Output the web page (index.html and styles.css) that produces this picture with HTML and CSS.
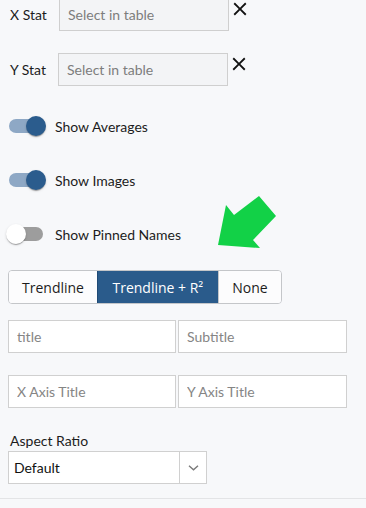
FILE: index.html
```html
<!DOCTYPE html>
<html lang="en">
<head>
  <meta charset="UTF-8" />
  <title>Chart Options</title>
  <link rel="stylesheet" href="styles.css">
</head>
<body>
  <div class="panel">
    <div class="stat-row">
      <label class="stat-label">X Stat</label>
      <input class="stat-input" type="text" placeholder="Select in table" readonly />
      <svg class="clear" viewBox="0 0 24 24"><path d="M19 6.41L17.59 5 12 10.59 6.41 5 5 6.41 10.59 12 5 17.59 6.41 19 12 13.41 17.59 19 19 17.59 13.41 12z"/></svg>
    </div>
    <div class="stat-row stat-row-y">
      <label class="stat-label">Y Stat</label>
      <input class="stat-input" type="text" placeholder="Select in table" readonly />
      <svg class="clear" viewBox="0 0 24 24"><path d="M19 6.41L17.59 5 12 10.59 6.41 5 5 6.41 10.59 12 5 17.59 6.41 19 12 13.41 17.59 19 19 17.59 13.41 12z"/></svg>
    </div>

    <div class="toggles">
      <label class="toggle">
        <span class="switch on"><span class="track"></span><span class="thumb"></span></span>
        Show Averages
      </label>
      <label class="toggle">
        <span class="switch on"><span class="track"></span><span class="thumb"></span></span>
        Show Images
      </label>
      <label class="toggle">
        <span class="switch"><span class="track"></span><span class="thumb"></span></span>
        Show Pinned Names
      </label>
      <!-- pointer arrow drawn over the screenshot -->
      <svg class="arrow" viewBox="0 0 60 56" width="60" height="56">
        <polygon points="1,50 43,53 36,45 59,21 42,1 17,20 9,10" fill="#12d147"/>
      </svg>
    </div>

    <div class="btn-group">
      <button class="seg">Trendline</button>
      <button class="seg active">Trendline + R²</button>
      <button class="seg last">None</button>
    </div>

    <div class="field-grid">
      <input class="text-input" type="text" placeholder="title" />
      <input class="text-input" type="text" placeholder="Subtitle" />
    </div>
    <div class="field-grid field-grid-axis">
      <input class="text-input" type="text" placeholder="X Axis Title" />
      <input class="text-input" type="text" placeholder="Y Axis Title" />
    </div>

    <div class="select-group">
      <label class="select-label">Aspect Ratio</label>
      <div class="select">
        <span class="select-value">Default</span>
        <span class="select-arrow">
          <svg viewBox="0 0 11 6" width="11" height="6"><path d="M1 0.8l4.5 4L10 0.8" fill="none" stroke="#7a7a7a" stroke-width="1.4"/></svg>
        </span>
      </div>
    </div>
  </div>
</body>
</html>
```

FILE: styles.css
```css
* {
  margin: 0;
  padding: 0;
  box-sizing: border-box;
}

body {
  font-family: 'Lato', 'Liberation Sans', Arial, sans-serif;
  background: #f7f8fa;
  color: #1c1c1c;
  font-size: 14px;
  overflow: hidden;
}

.panel {
  margin-top: -2px;
  padding: 0 0 14px 8px;
  border-bottom: 1px solid #e3e4e6;
}

/* stat pickers */
.stat-row {
  display: flex;
  align-items: center;
  height: 33px;
}
.stat-row-y {
  margin-top: 22px;
}
.stat-label {
  width: 50px;
  padding-left: 2px;
  font-size: 14px;
}
.stat-input {
  width: 170px;
  height: 33px;
  padding: 0 8px;
  border: 1px solid #cfcfcf;
  background: #f3f4f6;
  font-family: inherit;
  font-size: 14px;
  color: #333;
  outline: none;
}
.stat-row:first-child .stat-input {
  margin-left: 1px;
}
.stat-input::placeholder {
  color: #7d7d7d;
}
.clear {
  align-self: flex-start;
  width: 22px;
  height: 22px;
  fill: #111;
}

/* switches */
.toggles {
  position: relative;
  margin-top: 21px;
  display: flex;
  flex-direction: column;
  gap: 16px;
}
.toggle {
  display: flex;
  align-items: center;
  height: 38px;
  margin-left: -11px;
  font-size: 14px;
}
.switch {
  position: relative;
  width: 58px;
  height: 38px;
  flex-shrink: 0;
}
.track {
  position: absolute;
  left: 12px;
  top: 12px;
  width: 34px;
  height: 14px;
  border-radius: 7px;
  background: #9d9d9d;
}
.thumb {
  position: absolute;
  left: 9px;
  top: 9px;
  width: 20px;
  height: 20px;
  border-radius: 50%;
  background: #fff;
  box-shadow: 0 2px 1px -1px rgba(0, 0, 0, 0.2), 0 1px 1px 0 rgba(0, 0, 0, 0.14), 0 1px 3px 0 rgba(0, 0, 0, 0.12);
}
.switch.on .track {
  background: #8ea8c5;
}
.switch.on .thumb {
  left: 29px;
  background: #2b5c8d;
}
.arrow {
  position: absolute;
  left: 209px;
  top: 88px;
}

/* trendline buttons */
.btn-group {
  display: inline-flex;
  margin-top: 17px;
  height: 34px;
  border: 1px solid #c4c6c9;
  border-radius: 4px;
  overflow: hidden;
}
.seg {
  border: none;
  background: #fcfcfd;
  font-family: 'Open Sans', 'Liberation Sans', Arial, sans-serif;
  font-size: 14px;
  color: #1c1c1c;
  padding: 0 13px;
  cursor: pointer;
}
.seg + .seg {
  border-left: 1px solid #c4c6c9;
}
.seg.active {
  background: #2a5b8b;
  color: #fff;
  border-color: #1f4a75;
  padding: 0 14.5px;
}
.seg.last {
  padding: 0 13.5px;
}

/* title inputs */
.field-grid {
  display: grid;
  grid-template-columns: 168px 169px;
  gap: 2px;
  margin-top: 16px;
}
.field-grid-axis {
  margin-top: 22px;
}
.text-input {
  height: 33px;
  padding: 0 8px;
  border: 1px solid #d0d0d0;
  background: #fff;
  font-family: inherit;
  font-size: 14px;
  outline: none;
}
.text-input::placeholder {
  color: #858585;
}

/* aspect ratio */
.select-group {
  margin-top: 24px;
}
.select-label {
  display: block;
  padding-left: 2px;
  font-size: 14px;
  line-height: 18px;
  margin-bottom: 1px;
}
.select {
  display: flex;
  width: 199px;
  height: 33px;
  border: 1px solid #d0d0d0;
  background: #fff;
}
.select-value {
  flex: 1;
  display: flex;
  align-items: center;
  padding-left: 5px;
  color: #111;
}
.select-arrow {
  width: 27px;
  border-left: 1px solid #d0d0d0;
  display: flex;
  align-items: center;
  justify-content: center;
}
```
